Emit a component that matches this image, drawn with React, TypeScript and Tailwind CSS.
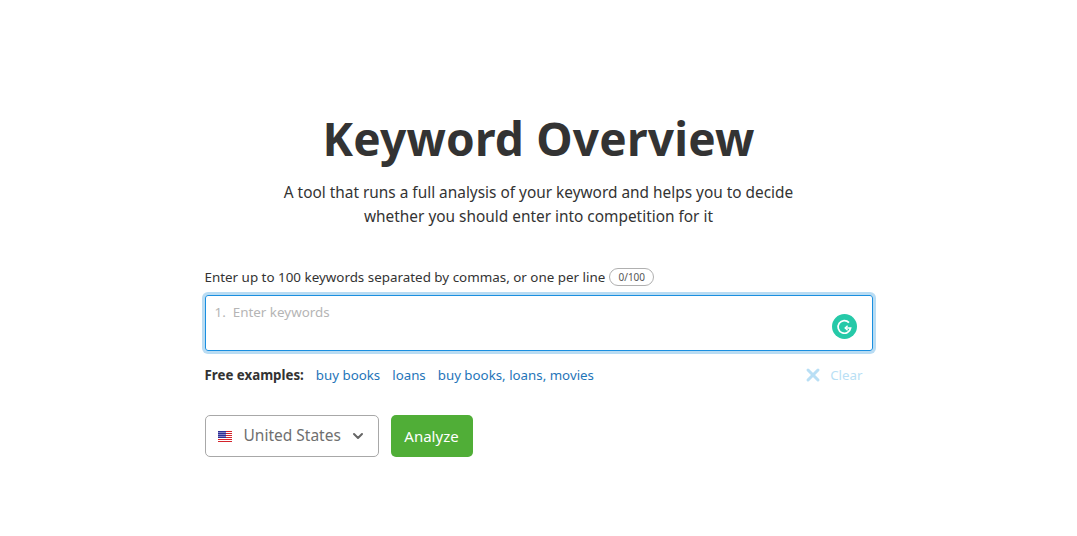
import React from 'react';
import { ChevronDown, X } from 'lucide-react';

function UsFlag() {
  return (
    <svg width="14" height="11" viewBox="0 0 14 11" className="shrink-0">
      <rect width="14" height="11" fill="#fff" />
      {[0, 2, 4, 6, 8, 10].map(y => (
        <rect key={y} y={y} width="14" height="1" fill="#d4232b" />
      ))}
      <rect width="8" height="7" fill="#2f2f96" />
      {[0.5, 2.5, 4.5, 6.5].flatMap(x =>
        [1, 3, 5].map(y => <rect key={`${x}-${y}`} x={x} y={y} width="1" height="1" fill="#d5d5f0" />)
      )}
    </svg>
  );
}

function GrammarlyBadge() {
  return (
    <svg width="25" height="25" viewBox="0 0 25 25">
      <circle cx="12.5" cy="12.5" r="12.5" fill="#26c9a8" />
      <path d="M17 8.6A6.3 6.3 0 1 0 18.6 14H13.4" fill="none" stroke="#fff" strokeWidth="1.7" />
      <path d="M15.6 11.8L13.2 14L15.6 16.2" fill="none" stroke="#fff" strokeWidth="1.4" />
    </svg>
  );
}

export default function App() {
  return (
    <div className="min-h-[536px] bg-white flex flex-col items-center pt-[107px] font-['Noto_Sans',sans-serif] text-[#333]">
      <h1 className="text-[46px] leading-[62px] font-bold tracking-[0.2px]">Keyword Overview</h1>
      <p className="mt-[12px] text-[15.4px] leading-[24px] text-center w-[560px]">
        A tool that runs a full analysis of your keyword and helps you to decide
        <br />
        whether you should enter into competition for it
      </p>

      <div className="w-[668px] mt-[38px]">
        <div className="flex items-center gap-[4px] h-[20px] text-[13.4px] leading-[20px]">
          <span>Enter up to 100 keywords separated by commas, or one per line</span>
          <span className="h-[18px] w-[45px] text-center border border-[#b0b0b0] rounded-full text-[10px] leading-[16px] text-[#555]">
            0/100
          </span>
        </div>

        <div className="relative mt-[8px] h-[56px] rounded-[3px] border border-[#1a8fe0] ring-[3px] ring-[#b9dcf3] px-[9px] pt-[6px]">
          <div className="flex gap-[7px] text-[13.4px] leading-[20px] text-[#b5b5b5]">
            <span>1.</span>
            <span>Enter keywords</span>
          </div>
          <div className="absolute right-[15px] bottom-[11px] flex">
            <GrammarlyBadge />
          </div>
        </div>

        <div className="flex items-center mt-[14px] h-[20px] text-[13.3px] leading-[20px]">
          <span className="font-bold mr-[12px]">Free examples:</span>
          <a className="text-[#1f75b9] mr-[12px]">buy books</a>
          <a className="text-[#1f75b9] mr-[12px]">loans</a>
          <a className="text-[#1f75b9]">buy books, loans, movies</a>
          <div className="ml-auto mr-[10px] flex items-center gap-[8px] text-[#b9dff5]">
            <X size={20} strokeWidth={3.6} className="-mr-[1px]" />
            <span>Clear</span>
          </div>
        </div>

        <div className="flex gap-[12px] mt-[30px]">
          <div className="w-[174px] h-[42px] flex items-center border border-[#a8a8a8] rounded-[5px] pl-[12px] pr-[12px] text-[#6f6f6f] text-[15.5px]">
            <UsFlag />
            <span className="ml-[12px]">United States</span>
            <ChevronDown size={16} strokeWidth={3} className="ml-auto text-[#666]" />
          </div>
          <button className="w-[82px] h-[42px] rounded-[5px] bg-[#50ae37] text-white text-[15px]">
            Analyze
          </button>
        </div>
      </div>
    </div>
  );
}
